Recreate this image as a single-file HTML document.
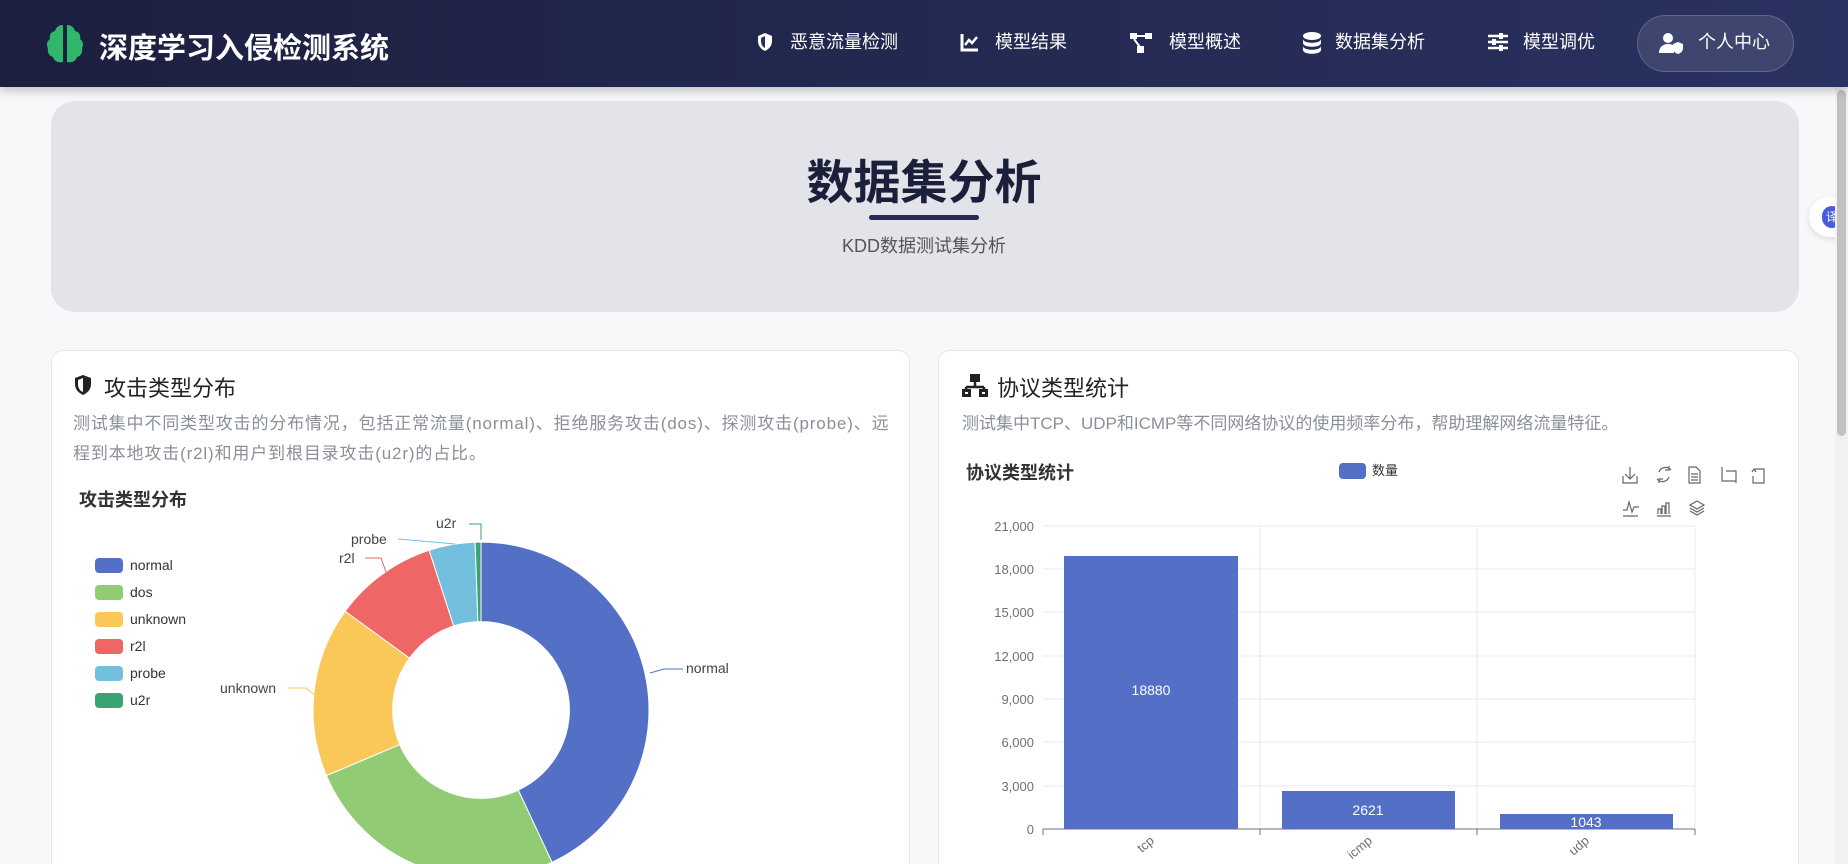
<!DOCTYPE html>
<html><head><meta charset="utf-8">
<style>
*{margin:0;padding:0;box-sizing:border-box}
html,body{width:1848px;height:864px;overflow:hidden}
body{background:#f7f8fa;font-family:"Liberation Sans","Noto Sans CJK SC",sans-serif;position:relative}
#wrap{position:absolute;left:0;top:0;width:1848px;height:864px;overflow:hidden}
.nav{position:absolute;left:0;top:0;width:1848px;height:87px;background:linear-gradient(90deg,#1c1f3f,#2a3261);box-shadow:0 3px 10px rgba(0,0,0,.25);z-index:2}
.abs{position:absolute}
.logo{left:99px;top:25px;font-size:29px;font-weight:bold;color:#fff}
.ni{position:absolute;top:30px;font-size:18px;color:#fff;line-height:24px}
.ni svg{position:absolute;top:2px}
.btn{left:1637px;top:15px;width:157px;height:57px;border-radius:29px;background:rgba(255,255,255,.1);border:1px solid rgba(255,255,255,.18)}
.hero{left:51px;top:101px;width:1748px;height:211px;border-radius:24px;background:#e2e4e9}
.card{background:#fff;border:1px solid #e6e8ee;border-radius:12px;top:350px;height:540px}
.ct{font-size:22px;color:#222;top:371px}
.cd{font-size:17px;color:#8a8f99;line-height:30px}
.sb{left:1835px;top:87px;width:13px;height:777px;background:#f1f1f1}
.sbt{left:1837px;top:90px;width:9px;height:346px;background:#c1c1c1;border-radius:5px}
</style></head><body><div id="wrap">
<div class="nav">
 <svg class="abs" style="left:43px;top:22px" width="44" height="44" viewBox="0 0 44 44"><path d="M20 3c-5 0-7 3-8 6-4 1-6 4-5 8-3 2-4 6-2 9-1 4 1 8 5 9 1 4 5 6 10 5z" fill="#2fb86b"/><path d="M24 3c5 0 7 3 8 6 4 1 6 4 5 8 3 2 4 6 2 9 1 4-1 8-5 9-1 4-5 6-10 5z" fill="#2fb86b"/></svg>
 <div class="abs logo">深度学习入侵检测系统</div>
 <div class="ni" style="left:755px"><svg style="left:0" width="20" height="20" viewBox="0 0 20 20"><path d="M10 1l7 3v5c0 5-3 8-7 10-4-2-7-5-7-10V4z" fill="#fff"/><path d="M10 4v12c-2-1-4-3-4-7V6z" fill="#2a3060"/></svg><span style="margin-left:35px">恶意流量检测</span></div>
 <div class="ni" style="left:960px"><svg style="left:0" width="20" height="20" viewBox="0 0 20 20"><path d="M2 2v16h16" stroke="#fff" stroke-width="3" fill="none"/><path d="M5 13l4-5 3 3 5-6" stroke="#fff" stroke-width="2.5" fill="none"/></svg><span style="margin-left:35px">模型结果</span></div>
 <div class="ni" style="left:1130px"><svg style="left:0" width="22" height="22" viewBox="0 0 22 22"><rect x="0" y="1" width="7" height="6" fill="#fff"/><rect x="15" y="1" width="7" height="6" fill="#fff"/><rect x="7" y="14" width="7" height="7" fill="#fff"/><path d="M7 4h8M4 7l6 8" stroke="#fff" stroke-width="2"/></svg><span style="margin-left:39px">模型概述</span></div>
 <div class="ni" style="left:1302px"><svg style="left:0" width="20" height="22" viewBox="0 0 20 22"><ellipse cx="10" cy="4" rx="9" ry="4" fill="#fff"/><path d="M1 7c0 5 18 5 18 0v4c0 5-18 5-18 0zM1 14c0 5 18 5 18 0v4c0 5-18 5-18 0z" fill="#fff"/></svg><span style="margin-left:33px">数据集分析</span></div>
 <div class="ni" style="left:1487px"><svg style="left:0" width="22" height="20" viewBox="0 0 22 20"><path d="M1 4h20M1 10h20M1 16h20" stroke="#fff" stroke-width="2.5"/><rect x="12" y="1" width="4" height="6" fill="#fff"/><rect x="5" y="7" width="4" height="6" fill="#fff"/><rect x="12" y="13" width="4" height="6" fill="#fff"/></svg><span style="margin-left:36px">模型调优</span></div>
 <div class="abs btn"></div>
 <div class="ni" style="left:1659px"><svg style="left:0" width="26" height="22" viewBox="0 0 26 22"><circle cx="9" cy="6" r="5" fill="#fff"/><path d="M0 21c0-6 4-9 9-9 3 0 5 1 6 2v7z" fill="#fff"/><path d="M19 10l5 2v4c0 3-2 5-5 6-3-1-5-3-5-6v-4z" fill="#fff"/></svg><span style="margin-left:39px">个人中心</span></div>
</div>
<div class="abs hero"></div>
<div class="abs" style="left:0;width:1848px;top:155px;text-align:center;font-size:47px;line-height:56px;font-weight:bold;color:#1c1f3a">数据集分析</div>
<div class="abs" style="left:869px;top:215px;width:110px;height:5px;border-radius:3px;background:#262b55"></div>
<div class="abs" style="left:0;width:1848px;top:232px;text-align:center;font-size:18px;color:#555">KDD数据测试集分析</div>
<div class="abs" style="left:1809px;top:197px;width:45px;height:40px;border-radius:20px;background:#fff;box-shadow:0 2px 6px rgba(0,0,0,.12)"></div>
<div class="abs" style="left:1822px;top:206px;width:20px;height:22px;border-radius:10px;background:#4b5be0;color:#fff;font-size:12px;text-align:center;line-height:22px">译</div>

<div class="abs card" style="left:51px;width:859px"></div>
<div class="abs card" style="left:938px;width:861px"></div>
<svg class="abs" style="left:73px;top:374px" width="20" height="22" viewBox="0 0 20 22"><path d="M10 1l8 3v6c0 6-4 9-8 11-4-2-8-5-8-11V4z" fill="#222"/><path d="M10 4v14c-3-1-5-4-5-8V6z" fill="#fff"/></svg>
<div class="abs ct" style="left:104px">攻击类型分布</div>
<div class="abs cd" style="left:73px;top:409px;width:840px;letter-spacing:0.85px;white-space:nowrap">测试集中不同类型攻击的分布情况，包括正常流量(normal)、拒绝服务攻击(dos)、探测攻击(probe)、远<br>程到本地攻击(r2l)和用户到根目录攻击(u2r)的占比。</div>
<svg class="abs" style="left:962px;top:374px" width="26" height="24" viewBox="0 0 26 24"><rect x="8" y="0" width="10" height="8" fill="#222"/><path d="M13 8v5M4 13h18M4 13v3M22 13v3" stroke="#222" stroke-width="2.5" fill="none"/><rect x="0" y="15" width="9" height="8" fill="#222"/><rect x="17" y="15" width="9" height="8" fill="#222"/><rect x="3" y="18" width="3" height="2" fill="#fff"/><rect x="20" y="18" width="3" height="2" fill="#fff"/></svg>
<div class="abs ct" style="left:997px">协议类型统计</div>
<div class="abs cd" style="left:962px;top:409px">测试集中TCP、UDP和ICMP等不同网络协议的使用频率分布，帮助理解网络流量特征。</div>

<svg class="abs" style="left:0;top:0" width="1848" height="864" font-family="Liberation Sans, Noto Sans CJK SC, sans-serif">
 <text x="79" y="506" font-size="18" font-weight="bold" fill="#333">攻击类型分布</text>
 <g font-size="14" fill="#333">
  <rect x="95" y="558" width="28" height="15" rx="4" fill="#5470c6"/><text x="130" y="570">normal</text>
  <rect x="95" y="585" width="28" height="15" rx="4" fill="#91cc75"/><text x="130" y="597">dos</text>
  <rect x="95" y="612" width="28" height="15" rx="4" fill="#fac858"/><text x="130" y="624">unknown</text>
  <rect x="95" y="639" width="28" height="15" rx="4" fill="#ee6666"/><text x="130" y="651">r2l</text>
  <rect x="95" y="666" width="28" height="15" rx="4" fill="#73c0de"/><text x="130" y="678">probe</text>
  <rect x="95" y="693" width="28" height="15" rx="4" fill="#3ba272"/><text x="130" y="705">u2r</text>
 </g>
 <g transform="translate(481,710) scale(0.982) translate(-484,-710)">
 <g stroke="#fff" stroke-width="1">
  <path d="M484 539A171 171 0 0 1 556.3 865L522 791.6A90 90 0 0 0 484 620Z" fill="#5470c6"/>
  <path d="M556.3 865A171 171 0 0 1 326.6 776.8L401.2 745.2A90 90 0 0 0 522 791.6Z" fill="#91cc75"/>
  <path d="M326.6 776.8A171 171 0 0 1 345.7 609.5L411.2 657.1A90 90 0 0 0 401.2 745.2Z" fill="#fac858"/>
  <path d="M345.7 609.5A171 171 0 0 1 431.2 547.4L456.2 624.4A90 90 0 0 0 411.2 657.1Z" fill="#ee6666"/>
  <path d="M431.2 547.4A171 171 0 0 1 478 539.1L480.9 620.1A90 90 0 0 0 456.2 624.4Z" fill="#73c0de"/>
  <path d="M478 539.1A171 171 0 0 1 484 539L484 620A90 90 0 0 0 480.9 620.1Z" fill="#3ba272"/>
 </g>
 </g>
 <g fill="none" stroke-width="1">
  <path d="M650 673L664 669H683" stroke="#5470c6"/>
  <path d="M288 688H306L316 696" stroke="#fac858"/>
  <path d="M365 558H381L386 572" stroke="#ee6666"/>
  <path d="M398 539L455 544" stroke="#73c0de"/>
  <path d="M469 524H481V540" stroke="#3ba272"/>
 </g>
 <g font-size="14" fill="#444">
  <text x="686" y="673">normal</text><text x="220" y="693">unknown</text><text x="339" y="563">r2l</text><text x="351" y="544">probe</text><text x="436" y="528">u2r</text>
 </g>

 <text x="966" y="479" font-size="18" font-weight="bold" fill="#333">协议类型统计</text>
 <rect x="1339" y="463" width="27" height="16" rx="4" fill="#5470c6"/><text x="1372" y="475" font-size="13" fill="#333">数量</text>
 <g stroke="#666" stroke-width="1.2" fill="none">
  <path d="M1630 467v12M1625 474l5 5 5-5M1623 476v7h14v-7"/>
  <path d="M1671 470a7 7 0 0 0-12 2M1657 479a7 7 0 0 0 12-2M1669 466v4h-4M1659 483v-4h4"/>
  <path d="M1689 467h7l4 4v12h-11zM1691 474h7M1691 477h7M1691 480h7"/>
  <path d="M1722 467v14h14M1726 471h10v12"/>
  <path d="M1754 469h10v14h-11v-7M1754 469l-2 3M1754 469l2 3"/>
  <path d="M1623 510h4l2-8 3 10 2-5h5M1623 516h15"/>
  <path d="M1657 516h14M1658 514v-5h3v5M1662 514v-8h3v8M1666 514v-11h3v11"/>
  <path d="M1697 501l7 4-7 4-7-4zM1690 508l7 4 7-4M1690 511l7 4 7-4"/>
 </g>
 <g stroke="#e6e8ef" stroke-width="1">
  <path d="M1043 526H1695M1043 569H1695M1043 612H1695M1043 656H1695M1043 699H1695M1043 742H1695M1043 786H1695"/>
  <path d="M1260 526V829M1477 526V829M1695 526V829"/>
 </g>
 <path d="M1043 829H1695M1043 829v6M1260 829v6M1477 829v6M1695 829v6" stroke="#6e7079"/>
 <g font-size="13" fill="#6e7079" text-anchor="end">
  <text x="1034" y="531">21,000</text><text x="1034" y="574">18,000</text><text x="1034" y="617">15,000</text><text x="1034" y="661">12,000</text><text x="1034" y="704">9,000</text><text x="1034" y="747">6,000</text><text x="1034" y="791">3,000</text><text x="1034" y="834">0</text>
 </g>
 <rect x="1064" y="556" width="174" height="273" fill="#5470c6"/>
 <rect x="1282" y="791" width="173" height="38" fill="#5470c6"/>
 <rect x="1500" y="814" width="173" height="15" fill="#5470c6"/>
 <g font-size="14" fill="#fff" text-anchor="middle">
  <text x="1151" y="695">18880</text><text x="1368" y="815">2621</text><text x="1586" y="827">1043</text>
 </g>
 <g font-size="13" fill="#6e7079" text-anchor="end">
  <text transform="translate(1155,842) rotate(-40)">tcp</text>
  <text transform="translate(1373,842) rotate(-40)">icmp</text>
  <text transform="translate(1590,842) rotate(-40)">udp</text>
 </g>
</svg>
<div class="abs sb"></div><div class="abs sbt"></div>
</div></body></html>
